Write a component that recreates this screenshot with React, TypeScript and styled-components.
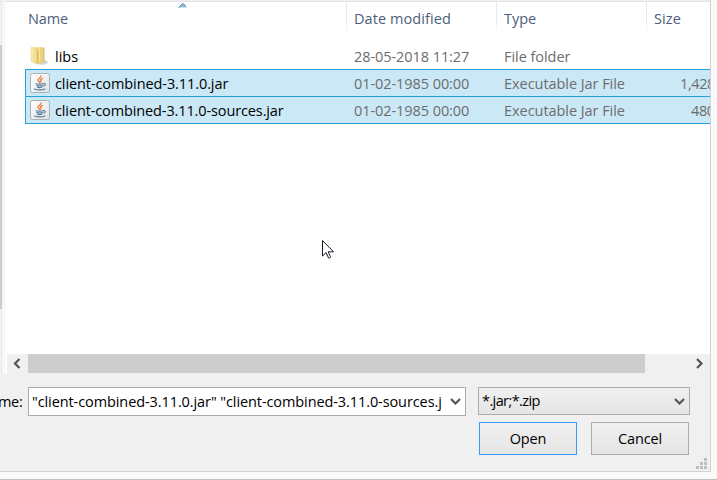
import React from "react";
import styled, { createGlobalStyle, css } from "styled-components";

const GlobalStyle = createGlobalStyle`
  * { box-sizing: border-box; }
  body { margin: 0; background: #fafafa; overflow: hidden; }
`;

const Desktop = styled.div`
  width: 717px;
  height: 480px;
  background: #fafafa;
  border-bottom: 1px solid #c0c0c0;
  font: 14.5px/20px "Open Sans", "Noto Sans", sans-serif;
  color: #000;
`;

const Dialog = styled.div`
  position: relative;
  width: 711px;
  height: 472px;
  display: flex;
  flex-direction: column;
  overflow: hidden;
  background: #f0f0f0;
  border-right: 1px solid #d3d3d3;
  border-bottom: 1px solid #d3d3d3;
`;

const Browser = styled.div`
  display: flex;
  height: 374px;
  border-top: 1px solid #f0f0f0;
`;

const TreeScroll = styled.div`
  width: 3px;
  padding-top: 43px;
  border-top: 1px solid #e5e5e5;
`;

const TreeThumb = styled.div`
  width: 2px;
  height: 264px;
  background: #cdcdcd;
`;

const Splitter = styled.div`
  width: 2px;
  background: #f2f2f2;
  border-left: 1px solid #fff;
`;

const FilePane = styled.div`
  width: 705px;
  display: flex;
  flex-direction: column;
  background: #fff;
  border-top: 1px solid #e5e5e5;
  overflow: hidden;
`;

const columns = css`
  display: grid;
  grid-template-columns: 321px 150px 150px 64px;
  margin-left: 20px;
`;

const Header = styled.div`
  ${columns}
  position: relative;
  height: 40px;
  color: #4c607a;
`;

const HeaderCell = styled.div<{ $first?: boolean }>`
  height: 30px;
  padding: 7px 0 0 ${(p) => (p.$first ? 3 : 7)}px;
  border-left: ${(p) => (p.$first ? 0 : 1)}px solid;
  border-image: linear-gradient(#dde9f5, #e3edf7 65%, #fff) 1;
`;

const SortArrow = styled.svg`
  position: absolute;
  left: 153px;
  top: 1px;
`;

const FileRow = styled.div<{ $selected?: boolean }>`
  ${columns}
  height: 28px;
  margin-bottom: -1px;
  flex: none;
  align-items: center;
  border: 1px solid ${(p) => (p.$selected ? "#26a0da" : "transparent")};
  border-right: 0;
  background: ${(p) => (p.$selected ? "#cbe8f6" : "transparent")};
`;

const Label = styled.span<{ $track?: number }>`
  display: block;
  white-space: pre;
  letter-spacing: ${(p) => p.$track ?? 0}px;
`;

const NameCell = styled.div`
  display: flex;
  align-items: center;
  gap: 5px;
  padding-left: 4px;

  ${Label} {
    padding-top: 2px;
  }
`;

const Detail = styled.div`
  padding: 2px 0 0 7px;
  color: #6d6d6d;
`;

const SizeDetail = styled(Detail)<{ $indent: number }>`
  padding-left: ${(p) => p.$indent}px;
`;

const ListSpace = styled.div`
  flex: 1;
`;

const HorizontalScroll = styled.div`
  display: flex;
  align-items: center;
  height: 19px;
  margin: 0 0 1px 2px;
  background: #f0f0f0;
  box-shadow: 0 1px #f0f0f0;
`;

const ScrollButton = styled.div`
  width: 21px;
  height: 19px;
  display: flex;
  align-items: center;
  justify-content: center;
`;

const ScrollThumb = styled.div`
  width: 617px;
  height: 19px;
  margin-right: 44px;
  background: #cdcdcd;
`;

const NameBar = styled.div`
  display: flex;
  align-items: flex-start;
  padding-top: 13px;
`;

const FieldLabel = styled.div`
  width: 28px;
  padding-top: 5px;
  text-indent: -2px;
`;

const NameInput = styled.div`
  display: flex;
  justify-content: space-between;
  align-items: center;
  width: 438px;
  height: 29px;
  margin-right: 12px;
  padding: 0 4px 0 3px;
  background: #fff;
  border: 1px solid #ababab;
`;

const TypeSelect = styled(NameInput)`
  width: 212px;
  height: 28px;
  margin: 0;
  background: linear-gradient(#f0f0f0, #e5e5e5);
`;

const Buttons = styled.div`
  display: flex;
  gap: 14px;
  padding: 6px 0 0 479px;
`;

const Button = styled.div<{ $primary?: boolean }>`
  display: flex;
  align-items: center;
  justify-content: center;
  width: 98px;
  height: 33px;
  background: linear-gradient(#f0f0f0, #e5e5e5);
  border: 1px solid ${(p) => (p.$primary ? "#3399ff" : "#acacac")};
`;

const Grip = styled.svg`
  position: absolute;
  right: 3px;
  bottom: 2px;
`;

const Pointer = styled.svg`
  position: absolute;
  left: 322px;
  top: 239px;
`;

function FolderIcon() {
  return (
    <svg width="20" height="20" viewBox="0 0 20 20">
      <defs>
        <linearGradient id="folder" x1="0" x2="1">
          <stop offset="0" stopColor="#fbedac" />
          <stop offset="1" stopColor="#eed88a" />
        </linearGradient>
      </defs>
      <path d="M13 13l4 2 1 2-5 2-6-1z" fill="#aaa" opacity=".5" />
      <path d="M4 1.5l9-.5 1 1V16l-6 2z" fill="#ecd27a" />
      <path d="M8 2h2v13l-2 2z" fill="#f7e6a0" />
      <path d="M1 1.5L2.500 1l4.500 3v14L1 15.500z" fill="url(#folder)" stroke="#e9d184" strokeWidth=".5" />
      <path d="M7 4l1.500-1v13L7 18z" fill="#d9b957" />
      <path d="M13 2l1.500.5v13l-1.500.7z" fill="#dfc266" />
    </svg>
  );
}

function JarIcon() {
  return (
    <svg width="20" height="20" viewBox="0 0 20 20">
      <defs>
        <linearGradient id="jar" x1="0" y1="0" x2="1" y2="1">
          <stop offset="0" stopColor="#fff" />
          <stop offset="1" stopColor="#dfe3e7" />
        </linearGradient>
      </defs>
      <rect x=".5" y=".5" width="19" height="19" rx="2" fill="url(#jar)" stroke="#a9b1b8" />
      <g fill="none" strokeLinecap="round">
        <path d="M11 3c.5 2-3.500 2.600-3 4.300.2.900 1.300 1.100 1.600 2M12.500 5.500c-1.600.6-2.400 1.300-1.600 2.200.4.600.1 1-.3 1.400" stroke="#e97830" strokeWidth="1.300" />
        <path d="M6 10.700c1.700.5 5 .5 7 0M6.700 12.500c1.700.6 4 .6 5.700 0M7.400 14.200c1.400.5 3 .5 4.300 0M4.500 16c2.800 1.200 8 1.200 10.500 0M13.600 10.600c2.500-.2 2.100 2.300-.3 2.600" stroke="#58799a" strokeWidth="1.150" />
      </g>
    </svg>
  );
}

const chevronPaths = {
  left: "M6.500 1L2 5.500 6.500 10",
  right: "M2 1l4.500 4.500L2 10",
  down: "M1 2l4.500 4.500L10 2",
};

function Chevron({ direction }: { direction: keyof typeof chevronPaths }) {
  const down = direction === "down";
  return (
    <svg width={down ? 11 : 9} height={down ? 9 : 11}>
      <path d={chevronPaths[direction]} fill="none" stroke="#555" strokeWidth="2.200" />
    </svg>
  );
}

const files = [
  { name: "libs", date: "28-05-2018 11:27", type: "File folder", size: "", indent: 0, track: 0, folder: true },
  { name: "client-combined-3.11.0.jar", date: "01-02-1985 00:00", type: "Executable Jar File", size: "1,428 KB", indent: 33, track: -0.09, folder: false },
  { name: "client-combined-3.11.0-sources.jar", date: "01-02-1985 00:00", type: "Executable Jar File", size: "480 KB", indent: 44, track: -0.12, folder: false },
];

const gripDots = [[8, 0], [4, 4], [8, 4], [0, 8], [4, 8], [8, 8]];

export default function App() {
  return (
    <Desktop>
      <GlobalStyle />
      <Dialog>
        <Browser>
          <TreeScroll><TreeThumb /></TreeScroll>
          <Splitter />
          <FilePane>
            <Header>
              <HeaderCell $first><Label $track={-0.1}>Name</Label></HeaderCell>
              <HeaderCell><Label $track={0.08}>Date modified</Label></HeaderCell>
              <HeaderCell><Label>Type</Label></HeaderCell>
              <HeaderCell><Label $track={0.1}>Size</Label></HeaderCell>
              <SortArrow width="10" height="5">
                <path d="M1 4.500L5 .5l4 4z" fill="#8fc4dd" />
                <path d="M.5 4.500L5 .5l3 3" fill="none" stroke="#477590" />
              </SortArrow>
            </Header>
            {files.map((file) => (
              <FileRow key={file.name} $selected={!file.folder}>
                <NameCell>
                  {file.folder ? <FolderIcon /> : <JarIcon />}
                  <Label $track={file.track}>{file.name}</Label>
                </NameCell>
                <Detail><Label $track={-0.07}>{file.date}</Label></Detail>
                <Detail><Label $track={-0.05}>{file.type}</Label></Detail>
                <SizeDetail $indent={file.indent}><Label $track={-0.4}>{file.size}</Label></SizeDetail>
              </FileRow>
            ))}
            <ListSpace />
            <HorizontalScroll>
              <ScrollButton><Chevron direction="left" /></ScrollButton>
              <ScrollThumb />
              <ScrollButton><Chevron direction="right" /></ScrollButton>
            </HorizontalScroll>
          </FilePane>
        </Browser>
        <NameBar>
          <FieldLabel><Label $track={-0.3}>me:</Label></FieldLabel>
          <NameInput>
            <Label $track={-0.09}>"client-combined-3.11.0.jar" "client-combined-3.11.0-sources.j</Label>
            <Chevron direction="down" />
          </NameInput>
          <TypeSelect>
            <Label $track={-0.6}>*.jar;*.zip</Label>
            <Chevron direction="down" />
          </TypeSelect>
        </NameBar>
        <Buttons>
          <Button $primary><Label $track={-0.15}>Open</Label></Button>
          <Button><Label $track={-0.15}>Cancel</Label></Button>
        </Buttons>
        <Grip width="11" height="11" fill="#bdbdbd">
          {gripDots.map(([x, y]) => <rect key={`${x}-${y}`} x={x} y={y} width="3" height="3" />)}
        </Grip>
        <Pointer width="13" height="21" viewBox="0 0 13 21">
          <path d="M.5 1.500v15.500l3.600-3.400 2.400 5.300c.8.800 2.200-.1 1.900-1.200L6.200 12.800h5.300z" fill="#fff" stroke="#1b1725" />
        </Pointer>
      </Dialog>
    </Desktop>
  );
}
